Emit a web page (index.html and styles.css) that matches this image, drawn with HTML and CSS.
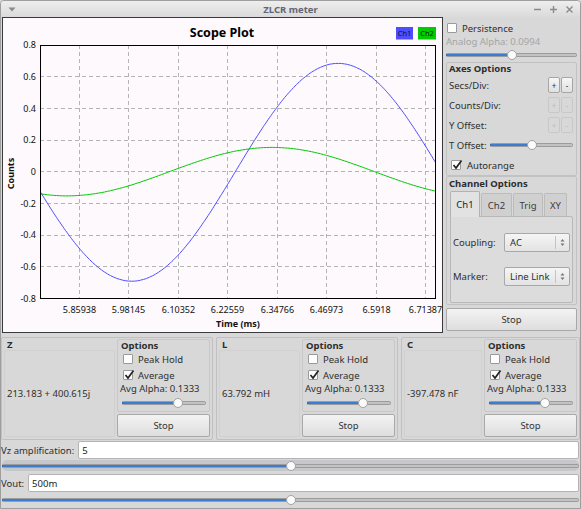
FILE: index.html
```html
<!DOCTYPE html>
<html lang="en">
<head>
  <meta charset="UTF-8" />
  <title>ZLCR meter</title>
  <link rel="stylesheet" href="styles.css">
</head>
<body>

<div class="window">
  <!-- Title bar -->
  <div class="titlebar">
    <div class="tb-left">
      <svg width="8" height="5" viewBox="0 0 8 5"><path d="M0.5 0.5 L7.5 0.5 L4 4.5 Z" fill="#8a8a8a"/></svg>
    </div>
    <div class="tb-title">ZLCR meter</div>
    <div class="tb-right">
      <svg width="9" height="9" viewBox="0 0 9 9"><path d="M1 4.5 H8" stroke="#8a8a8a" stroke-width="1.4"/></svg>
      <svg width="9" height="9" viewBox="0 0 9 9"><path d="M1 4.5 H8 M4.5 1 V8" stroke="#8a8a8a" stroke-width="1.4"/></svg>
      <svg width="9" height="9" viewBox="0 0 9 9"><path d="M1.5 1.5 L7.5 7.5 M7.5 1.5 L1.5 7.5" stroke="#8a8a8a" stroke-width="1.4"/></svg>
    </div>
  </div>

  <div class="main">
    <!-- Scope plot -->
    <div class="plot">
      <svg width="439" height="314" viewBox="3 18 439 314" class="plot-svg">
        <rect x="3" y="18" width="439" height="314" fill="#fdf9fd"/>
        <text x="222" y="36.5" class="p-title">Scope Plot</text>

        <rect x="396" y="27" width="17" height="12.5" fill="#4d4dff"/>
        <text x="404.5" y="36" class="p-legend">Ch1</text>
        <rect x="418" y="27" width="18" height="12.5" fill="#00cc00"/>
        <text x="427" y="36" class="p-legend">Ch2</text>

        <g class="grid">
          <line x1="79.5" y1="45" x2="79.5" y2="298"/>
          <line x1="128.5" y1="45" x2="128.5" y2="298"/>
          <line x1="178.5" y1="45" x2="178.5" y2="298"/>
          <line x1="227.5" y1="45" x2="227.5" y2="298"/>
          <line x1="277.5" y1="45" x2="277.5" y2="298"/>
          <line x1="326.5" y1="45" x2="326.5" y2="298"/>
          <line x1="376.5" y1="45" x2="376.5" y2="298"/>
          <line x1="425.5" y1="45" x2="425.5" y2="298"/>
          <line x1="40" y1="76.5" x2="436" y2="76.5"/>
          <line x1="40" y1="108.5" x2="436" y2="108.5"/>
          <line x1="40" y1="140.5" x2="436" y2="140.5"/>
          <line x1="40" y1="171.5" x2="436" y2="171.5"/>
          <line x1="40" y1="203.5" x2="436" y2="203.5"/>
          <line x1="40" y1="235.5" x2="436" y2="235.5"/>
          <line x1="40" y1="266.5" x2="436" y2="266.5"/>
        </g>

        <clipPath id="area"><rect x="40.5" y="45.5" width="395" height="253"/></clipPath>
        <g clip-path="url(#area)">
          <polyline id="ch2" class="trace" stroke="#00c800" points=""/>
          <polyline id="ch1" class="trace" stroke="#4f4fff" points=""/>
        </g>
        <rect x="40.5" y="45.5" width="395" height="253" class="frame"/>

        <g class="ylab">
          <text x="36" y="48.3">0.8</text>
          <text x="36" y="80">0.6</text>
          <text x="36" y="111.6">0.4</text>
          <text x="36" y="143.3">0.2</text>
          <text x="36" y="175">0</text>
          <text x="36" y="206.6">-0.2</text>
          <text x="36" y="238.3">-0.4</text>
          <text x="36" y="270">-0.6</text>
          <text x="36" y="301.6">-0.8</text>
        </g>
        <g class="xlab">
          <text x="79.5" y="312.5">5.85938</text>
          <text x="128.5" y="312.5">5.98145</text>
          <text x="178.5" y="312.5">6.10352</text>
          <text x="227.5" y="312.5">6.22559</text>
          <text x="277.5" y="312.5">6.34766</text>
          <text x="326.5" y="312.5">6.46973</text>
          <text x="376.5" y="312.5">6.5918</text>
          <text x="425.5" y="312.5">6.71387</text>
        </g>
        <text x="238" y="326.5" class="p-axis">Time (ms)</text>
        <text x="0" y="0" class="p-axis" transform="translate(14 173.5) rotate(-90)">Counts</text>
      </svg>
    </div>

    <!-- Side controls -->
    <div class="side">
      <div class="check"><span class="box"></span>Persistence</div>
      <div class="muted">Analog Alpha: 0.0994</div>
      <div class="slider" style="--v: 50%"><div class="groove"></div><div class="handle"></div></div>

      <div class="group axes">
        <div class="gtitle">Axes Options</div>
        <div class="arow"><span>Secs/Div:</span><span class="pm"><span class="sbtn">+</span><span class="sbtn">-</span></span></div>
        <div class="arow"><span>Counts/Div:</span><span class="pm off"><span class="sbtn">+</span><span class="sbtn">-</span></span></div>
        <div class="arow"><span>Y Offset:</span><span class="pm off"><span class="sbtn">+</span><span class="sbtn">-</span></span></div>
        <div class="arow"><span class="tlabel">T Offset:</span><div class="slider" style="--v: 50%"><div class="groove"></div><div class="handle"></div></div></div>
        <div class="arow"><div class="check auto"><span class="box on"><svg viewBox="0 0 10 10"><path d="M1.5 5 L4 8 L9.5 0.5" fill="none" stroke="#222" stroke-width="1.7"/></svg></span>Autorange</div></div>
      </div>

      <div class="group chan">
        <div class="gtitle">Channel Options</div>
        <div class="tabs">
          <span class="tab active">Ch1</span>
          <span class="tab t2">Ch2</span>
          <span class="tab t3">Trig</span>
          <span class="tab t4">XY</span>
        </div>
        <div class="pane">
          <div class="crow"><span>Coupling:</span><span class="combo">AC<span class="spin"><svg width="5" height="9" viewBox="0 0 5 9"><path d="M0.5 3.5 L2.5 1 L4.5 3.5 Z M0.5 5.5 L2.5 8 L4.5 5.5 Z" fill="#777"/></svg></span></span></div>
          <div class="crow"><span>Marker:</span><span class="combo">Line Link<span class="spin"><svg width="5" height="9" viewBox="0 0 5 9"><path d="M0.5 3.5 L2.5 1 L4.5 3.5 Z M0.5 5.5 L2.5 8 L4.5 5.5 Z" fill="#777"/></svg></span></span></div>
        </div>
      </div>

      <div class="btn side-stop">Stop</div>
    </div>
  </div>

  <!-- Measurements -->
  <div class="meas">
    <div class="mgroup z">
      <div class="mval"><div class="mtitle">Z</div><div class="mbox">213.183 + 400.615j</div></div>
      <div class="mside">
        <div class="opts">
          <div class="otitle">Options</div>
          <div class="check"><span class="box"></span>Peak Hold</div>
          <div class="check"><span class="box on"><svg viewBox="0 0 10 10"><path d="M1.5 5 L4 8 L9.5 0.5" fill="none" stroke="#222" stroke-width="1.7"/></svg></span>Average</div>
          <div class="alpha">Avg Alpha: 0.1333</div>
          <div class="slider" style="--v: 67%"><div class="groove"></div><div class="handle"></div></div>
        </div>
        <div class="btn">Stop</div>
      </div>
    </div>
    <div class="mgroup l">
      <div class="mval"><div class="mtitle">L</div><div class="mbox">63.792 mH</div></div>
      <div class="mside">
        <div class="opts">
          <div class="otitle">Options</div>
          <div class="check"><span class="box"></span>Peak Hold</div>
          <div class="check"><span class="box on"><svg viewBox="0 0 10 10"><path d="M1.5 5 L4 8 L9.5 0.5" fill="none" stroke="#222" stroke-width="1.7"/></svg></span>Average</div>
          <div class="alpha">Avg Alpha: 0.1333</div>
          <div class="slider" style="--v: 67%"><div class="groove"></div><div class="handle"></div></div>
        </div>
        <div class="btn">Stop</div>
      </div>
    </div>
    <div class="mgroup c">
      <div class="mval"><div class="mtitle">C</div><div class="mbox">-397.478 nF</div></div>
      <div class="mside">
        <div class="opts">
          <div class="otitle">Options</div>
          <div class="check"><span class="box"></span>Peak Hold</div>
          <div class="check"><span class="box on"><svg viewBox="0 0 10 10"><path d="M1.5 5 L4 8 L9.5 0.5" fill="none" stroke="#222" stroke-width="1.7"/></svg></span>Average</div>
          <div class="alpha">Avg Alpha: 0.1333</div>
          <div class="slider" style="--v: 67%"><div class="groove"></div><div class="handle"></div></div>
        </div>
        <div class="btn">Stop</div>
      </div>
    </div>
  </div>

  <!-- Vz / Vout -->
  <div class="param"><span>Vz amplification:</span><span class="field">5</span></div>
  <div class="slider wide band" style="--v: 50%"><div class="groove"></div><div class="handle"></div></div>
  <div class="param vout"><span>Vout:</span><span class="field">500m</span></div>
  <div class="slider wide last" style="--v: 50%"><div class="groove"></div><div class="handle"></div></div>
</div>

<script>
  // scope traces, plot area x 40..436, y 45..298 (0.8 .. -0.8)
  const ch1 = [], ch2 = [];
  const toY = v => (45 + (0.8 - v) * 158.3).toFixed(1);
  for (let x = 40; x <= 437; x += 1.5) {
    const b = -0.004 - 0.688 * Math.cos(2 * Math.PI * (x - 131.7) / 413);
    const g = -0.153 * Math.cos(2 * Math.PI * (x - 67) / 410);
    ch1.push(x + ',' + toY(b));
    ch2.push(x + ',' + toY(g));
  }
  document.getElementById('ch1').setAttribute('points', ch1.join(' '));
  document.getElementById('ch2').setAttribute('points', ch2.join(' '));
</script>

</body>
</html>
```

FILE: styles.css
```css
* { margin: 0; padding: 0; box-sizing: border-box; }

html, body {
  width: 581px;
  height: 509px;
  overflow: hidden;
  background: #d8d8d8;
}

body {
  font-family: "Noto Sans", "Open Sans", sans-serif;
  font-size: 9.5px;
  color: #2e2e2e;
}

.window {
  width: 581px;
  height: 509px;
  border: 1px solid #9e9e9e;
  border-radius: 4px 4px 0 0;
  background: #d8d8d8;
  display: flex;
  flex-direction: column;
  overflow: hidden;
}

/* title bar */
.titlebar {
  height: 16px;
  flex: none;
  display: grid;
  grid-template-columns: 1fr auto 1fr;
  align-items: center;
  background: linear-gradient(#eeeeee, #dadada);
}

.tb-left { padding-left: 7px; display: flex; }
.tb-title { font-weight: bold; color: #626673; font-size: 9.5px; }
.tb-right {
  display: flex;
  justify-content: flex-end;
  gap: 7px;
  padding-right: 6px;
}

/* main area */
.main {
  height: 316px;
  flex: none;
  display: flex;
}

.plot {
  width: 441px;
  margin-left: 1px;
  border: 1px solid #3a3a3a;
  background: #fdf9fd;
}

.plot-svg { display: block; font-family: "Noto Sans", sans-serif; }
.p-title { font-size: 12.5px; font-weight: bold; text-anchor: middle; fill: #000; }
.p-legend { font-size: 7.5px; text-anchor: middle; fill: #101010; }
.p-axis { font-size: 9px; font-weight: bold; text-anchor: middle; fill: #111; }
.grid line { stroke: #b4b4b4; stroke-width: 1; stroke-dasharray: 4 3; }
.frame { fill: none; stroke: #000; stroke-width: 1; }
.trace { fill: none; stroke-width: 1; }
.ylab text { font-size: 9px; text-anchor: end; fill: #111; }
.xlab text { font-size: 9px; text-anchor: middle; fill: #111; }

.side {
  flex: 1;
  padding: 5px 3px 0 3px;
  display: flex;
  flex-direction: column;
}

/* checkboxes */
.check {
  display: flex;
  align-items: center;
  gap: 5px;
  height: 12px;
  padding-left: 1px;
}

.box {
  width: 10px;
  height: 10px;
  background: #fdfdfd;
  border: 1px solid #9a9a9a;
  border-radius: 1px;
  position: relative;
}

.box svg {
  position: absolute;
  left: 0;
  top: -1px;
  width: 10px;
  height: 10px;
  overflow: visible;
}

.muted {
  color: #a4a4a4;
  height: 15px;
  line-height: 15px;
}

/* sliders */
.slider {
  position: relative;
  height: 11px;
  display: flex;
  align-items: center;
}

.groove {
  flex: 1;
  height: 4px;
  border-radius: 2px;
  border: 1px solid #9c9c9c;
  background: linear-gradient(to right, #3b7dd0 var(--v), #c2c2c2 var(--v));
  border-left-color: #27579a;
}

.handle {
  position: absolute;
  left: var(--v);
  top: 50%;
  width: 10px;
  height: 10px;
  margin: -5px 0 0 -5px;
  border-radius: 50%;
  background: #fbfbfb;
  border: 1px solid #a2a2a2;
}

/* group boxes */
.group {
  border: 1px solid #c2c2c2;
  border-radius: 2px;
  padding: 0 3px 0 2px;
}

.gtitle {
  font-weight: bold;
  height: 12px;
  line-height: 12px;
  font-size: 9.5px;
}

.axes { margin-top: 2px; height: 114px; }

.arow {
  height: 20px;
  display: flex;
  align-items: center;
  justify-content: space-between;
}

.pm { display: flex; gap: 1px; }

.sbtn {
  width: 12px;
  height: 16px;
  border: 1px solid #a6a6a6;
  border-radius: 2px;
  background: linear-gradient(#f6f6f6, #e0e0e0);
  display: flex;
  align-items: center;
  justify-content: center;
  font-size: 8px;
}

.pm.off .sbtn {
  border-color: #c8c8c8;
  background: #d8d8d8;
  color: #bcbcbc;
}

.tlabel { width: 41px; flex: none; }
.arow .slider { flex: 1; }
.check.auto { padding-left: 2px; gap: 6px; }

.chan { height: 129px; }
.chan .gtitle { height: 13px; line-height: 13px; }

.tabs {
  height: 26px;
  display: flex;
  align-items: flex-end;
  gap: 1px;
  padding-left: 1px;
}

.tab {
  height: 23px;
  display: flex;
  align-items: center;
  justify-content: center;
  border: 1px solid #bcbcbc;
  border-bottom: none;
  border-radius: 2px 2px 0 0;
  background: #d0d0d0;
  color: #3a3a3a;
}

.tab.active {
  width: 30px;
  height: 26px;
  background: #e2e2e2;
  border-color: #b2b2b2;
  position: relative;
  top: 1px;
  color: #222;
}

.t2 { width: 31px; }
.t3 { width: 30px; }
.t4 { width: 23px; }

.pane {
  height: 87px;
  margin-left: 1px;
  border: 1px solid #b8b8b8;
  border-radius: 0 2px 2px 2px;
  background: #dcdcdc;
  padding: 15px 2px 0 2px;
  display: flex;
  flex-direction: column;
  gap: 14px;
}

.crow {
  height: 20px;
  display: flex;
  align-items: center;
  justify-content: space-between;
}

.combo {
  width: 66px;
  height: 19px;
  border: 1px solid #a8a8a8;
  border-radius: 2px;
  background: linear-gradient(#f5f5f5, #e3e3e3);
  display: flex;
  align-items: center;
  justify-content: space-between;
  padding-left: 5px;
}

.spin {
  width: 14px;
  height: 13px;
  border-left: 1px solid #c4c4c4;
  display: flex;
  align-items: center;
  justify-content: center;
}

/* push buttons */
.btn {
  height: 23px;
  border: 1px solid #a9a9a9;
  border-radius: 2px;
  background: linear-gradient(#f3f3f3, #dedede);
  display: flex;
  align-items: center;
  justify-content: center;
  color: #333;
}

.side-stop { margin-top: 3px; }

/* measurement groups */
.meas {
  height: 107px;
  flex: none;
  display: flex;
  gap: 3px;
  padding: 4px 0 0 0;
}

.mgroup {
  border: 1px solid #c0c0c0;
  border-radius: 2px;
  padding: 1px 2px 2px 2px;
  display: flex;
  gap: 2px;
}

.z { width: 212px; }
.l { width: 182px; }
.c { flex: 1; }

.mval {
  flex: 1;
  display: flex;
  flex-direction: column;
}

.mtitle {
  font-weight: bold;
  height: 11px;
  line-height: 11px;
  padding-left: 3px;
}

.mbox {
  flex: 1;
  border: 1px solid #d0d0d0;
  border-radius: 2px;
  display: flex;
  align-items: center;
  padding-left: 2px;
}

.mside {
  width: 93px;
  flex: none;
  display: flex;
  flex-direction: column;
  gap: 2px;
}

.opts {
  height: 74px;
  border: 1px solid #c8c8c8;
  border-radius: 2px;
  padding: 0 2px;
}

.otitle {
  font-weight: bold;
  height: 11px;
  line-height: 11px;
  padding-left: 1px;
}

.opts .check { height: 16px; padding-left: 3px; }
.alpha { height: 12px; line-height: 12px; }
.opts .slider { height: 12px; margin: 2px 1px 0 2px; }

/* parameter rows */
.param {
  height: 18px;
  margin-top: 1px;
  display: flex;
  align-items: center;
  gap: 4px;
}

.field {
  flex: 1;
  height: 18px;
  margin-right: 1px;
  background: #fff;
  border: 1px solid #b4b4b4;
  border-radius: 2px;
  display: flex;
  align-items: center;
  padding-left: 3px;
  color: #222;
}

.slider.wide { margin: 1px 1px 0 1px; }

.slider.band {
  height: 11px;
  background: #c5c7cb;
  border-radius: 5px;
}

.param.vout { margin-top: 3px; }
.slider.last { height: 12px; margin-top: 2px; }
```
